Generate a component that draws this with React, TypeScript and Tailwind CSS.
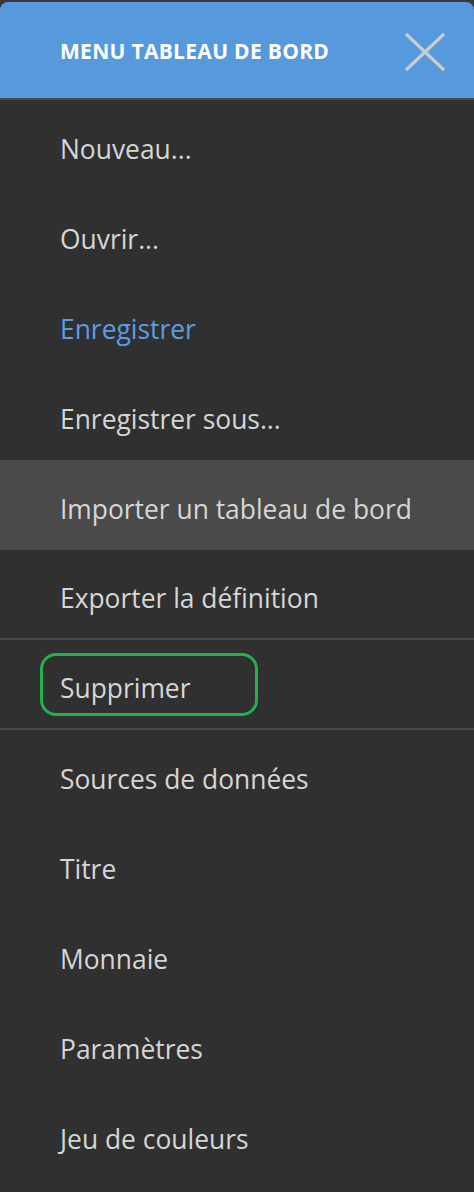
import React from "react";

const items: { label: string; tone?: "blue" | "hover"; sepAfter?: boolean; boxed?: boolean }[] = [
  { label: "Nouveau..." },
  { label: "Ouvrir..." },
  { label: "Enregistrer", tone: "blue" },
  { label: "Enregistrer sous..." },
  { label: "Importer un tableau de bord", tone: "hover" },
  { label: "Exporter la définition", sepAfter: true },
  { label: "Supprimer", sepAfter: true, boxed: true },
  { label: "Sources de données" },
  { label: "Titre" },
  { label: "Monnaie" },
  { label: "Paramètres" },
  { label: "Jeu de couleurs" },
];

export default function App() {
  return (
    <div
      className="w-[474px] h-[1192px] overflow-hidden bg-[#3a3a3a] pt-[2px]"
      style={{ fontFamily: '"Open Sans", "Noto Sans", sans-serif' }}
    >
      <div className="h-full bg-[#303030] rounded-t-[8px] overflow-hidden">
        {/* header */}
        <div className="h-[98px] bg-[#5699dd] flex items-center justify-between pl-[60px] pr-[28px] border-b-2 border-[#4a4a4a]">
          <span className="text-white font-bold text-[21px] tracking-[0.3px] mt-[4px]">MENU TABLEAU DE BORD</span>
          <svg width="42" height="40" viewBox="0 0 42 40" className="mt-[4px]">
            <path d="M2 2 L40 38 M40 2 L2 38" stroke="#cccccc" strokeWidth="3.2" fill="none" />
          </svg>
        </div>
        {/* items */}
        <div className="flex flex-col">
          {items.map((it) => (
            <div
              key={it.label}
              className={
                "relative h-[90px] flex items-center pl-[60px] text-[26.4px] " +
                (it.tone === "hover" ? "bg-[#4a4a4a] " : "") +
                (it.tone === "blue" ? "text-[#5a9de2] " : "text-[#d6d6d6] ") +
                (it.sepAfter ? "border-b-2 border-[#4a4a4a]" : "")
              }
            >
              <span className="mt-[9px]">{it.label}</span>
              {it.boxed && (
                <div className="absolute left-[40px] top-[13px] w-[218px] h-[63px] rounded-[16px] border-[3px] border-[#22b14c]" />
              )}
            </div>
          ))}
        </div>
      </div>
    </div>
  );
}
